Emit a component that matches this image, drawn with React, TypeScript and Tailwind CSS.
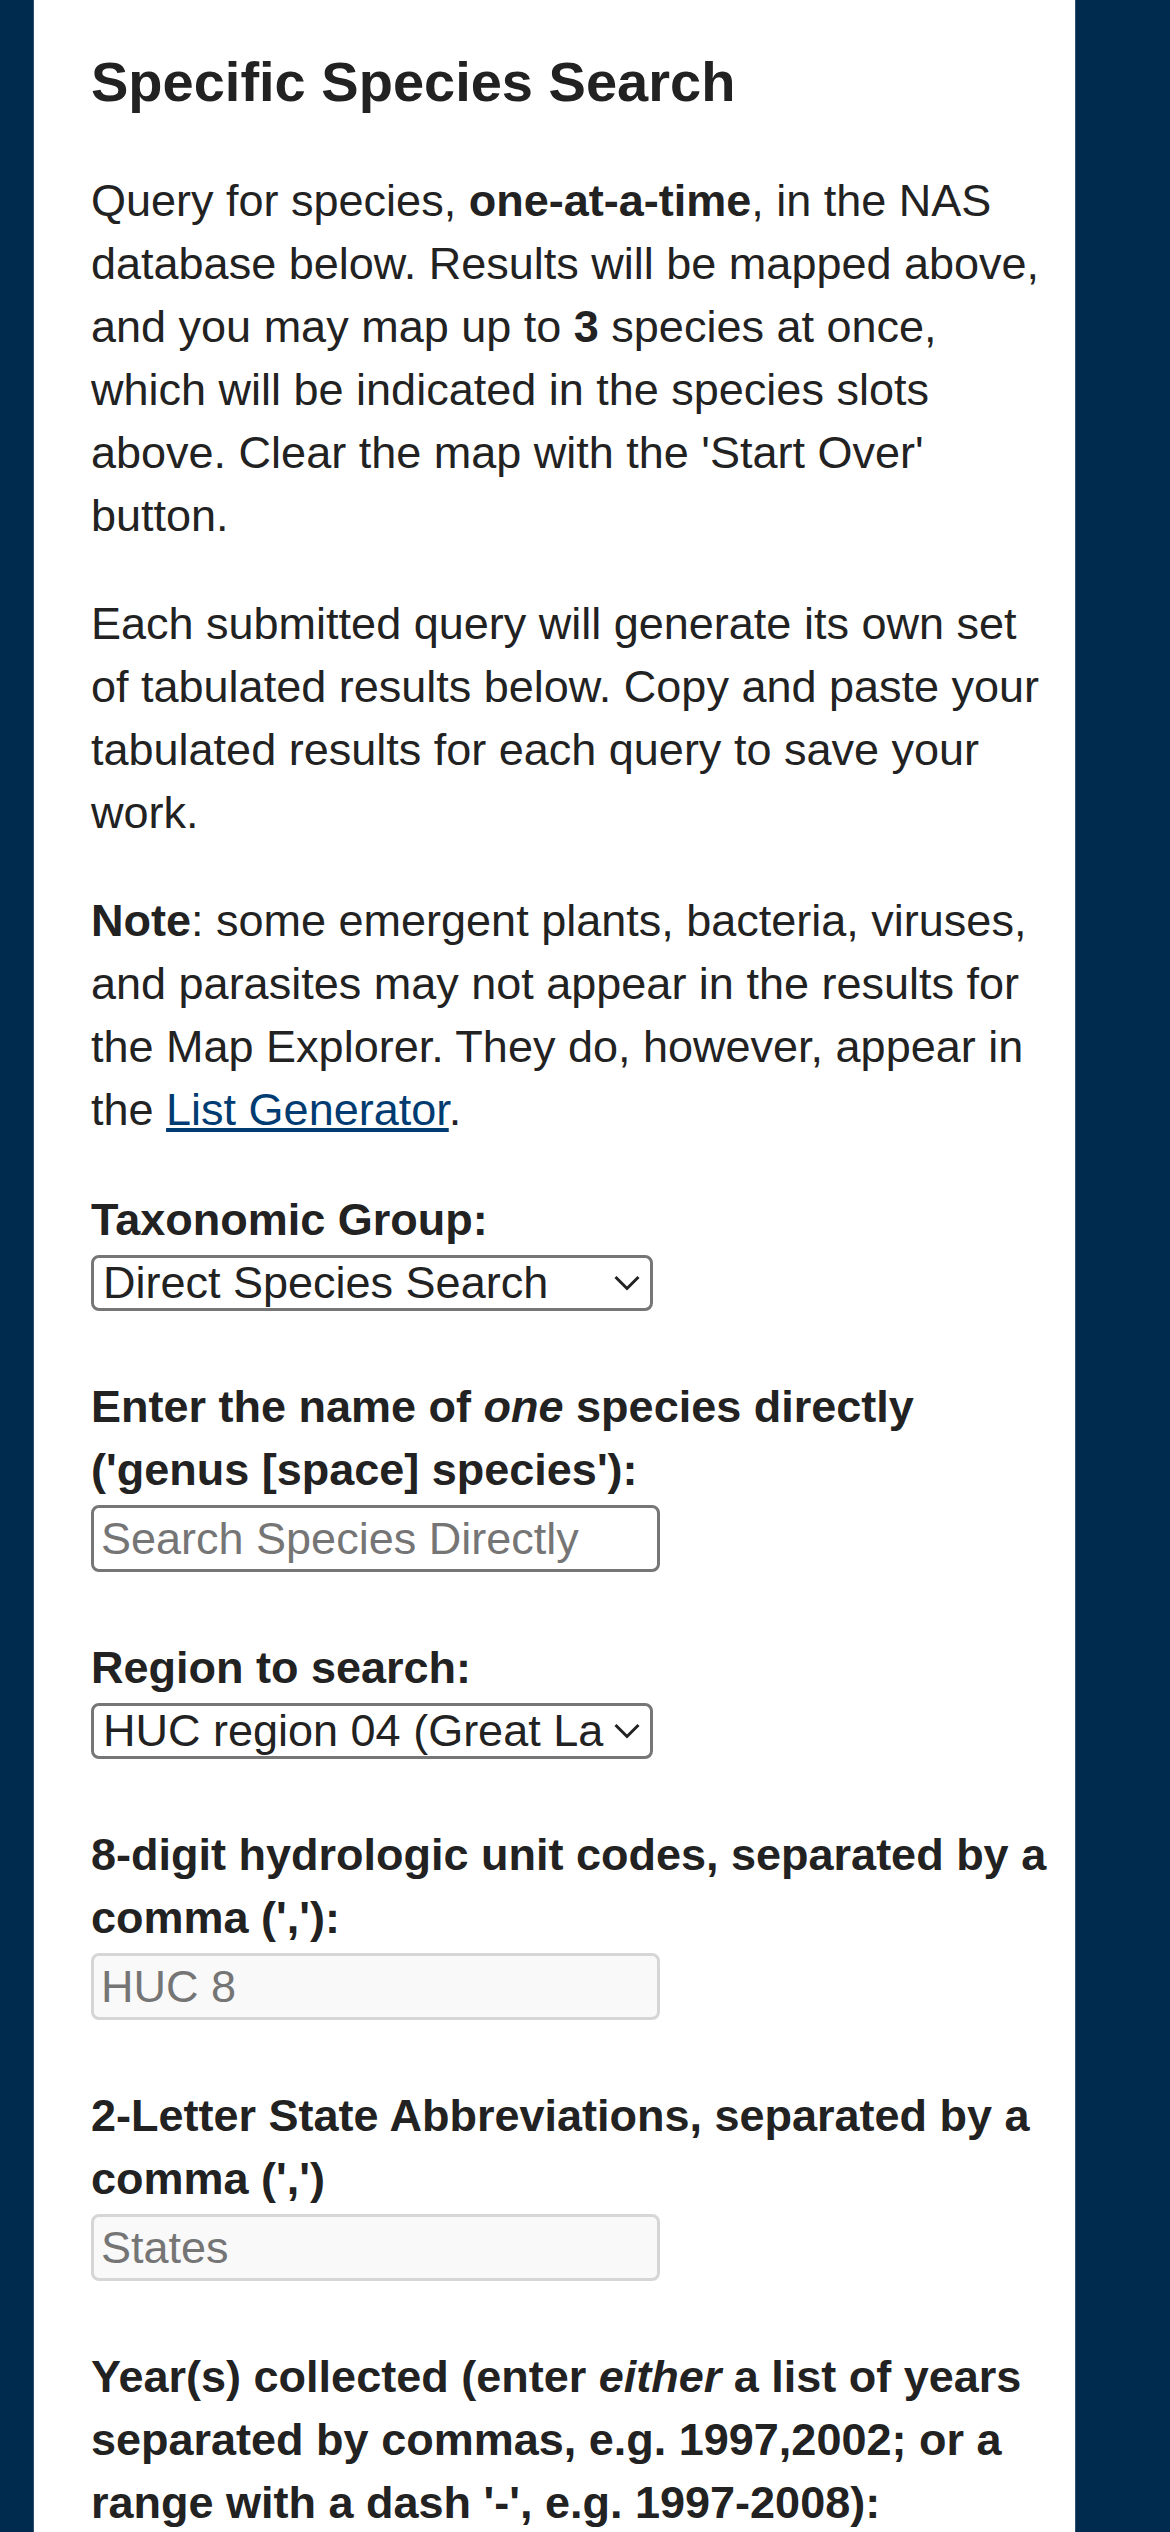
import React from 'react';

const font = { fontFamily: '"Liberation Sans", Arial, Helvetica, sans-serif' };

function Chevron() {
  return (
    <svg
      width="26"
      height="16"
      viewBox="0 0 26 16"
      fill="none"
      className="pointer-events-none absolute right-[13px] top-1/2 -translate-y-1/2"
    >
      <path d="M1.5 2 L13 13.5 L24.5 2" stroke="#222" strokeWidth="3" />
    </svg>
  );
}

function Select({ value, options }: { value: string; options: string[] }) {
  return (
    <div className="relative mt-1 w-[562px]">
      <select
        defaultValue={value}
        className="block h-[56px] w-full appearance-none overflow-hidden whitespace-nowrap rounded-[8px] border-[3px] border-[#767676] bg-white pl-[9px] pr-[45px] text-[45px] leading-[50px] text-[#222]"
      >
        {options.map((o) => (
          <option key={o} value={o}>
            {o}
          </option>
        ))}
      </select>
      <Chevron />
    </div>
  );
}

function TextInput({ placeholder, disabled }: { placeholder: string; disabled?: boolean }) {
  return (
    <input
      type="text"
      placeholder={placeholder}
      disabled={disabled}
      className={
        'mt-1 block h-[67px] w-[569px] rounded-[8px] border-[3px] px-[7px] text-[45px] text-[#222] placeholder:text-[#757575] ' +
        (disabled ? 'border-[#d6d6d6] bg-[#f9f9f9]' : 'border-[#767676] bg-white')
      }
    />
  );
}

function Field({ label, children }: { label: React.ReactNode; children: React.ReactNode }) {
  return (
    <div className="mb-[64px]">
      <label className="block font-bold">{label}</label>
      {children}
    </div>
  );
}

export default function App() {
  return (
    <div className="min-h-screen bg-[#012a4f] pl-[33px] pr-[94px]" style={font}>
      <div className="min-h-screen border-x border-[#2f4f70] bg-white pl-[57px] pr-[23px] text-[45px] leading-[63px] text-[#222]">
        <h2 className="pt-[48px] text-[56px] font-bold leading-[67px]">Specific Species Search</h2>

        <p className="mt-[54px]">
          Query for species, <b>one-at-a-time</b>, in the NAS database below. Results will be mapped above,
          and you may map up to <b>3</b> species at once, which will be indicated in the species slots above.
          Clear the map with the 'Start Over' button.
        </p>

        <p className="mt-[45px]">
          Each submitted query will generate its own set of tabulated results below. Copy and paste your
          tabulated results for each query to save your work.
        </p>

        <p className="mt-[45px] mb-[47px]">
          <b>Note</b>: some emergent plants, bacteria, viruses, and parasites may not appear in the results for
          the Map Explorer. They do, however, appear in the{' '}
          <a href="#" className="text-[#003c71] underline">
            List Generator
          </a>
          .
        </p>

        <Field label="Taxonomic Group:">
          <Select
            value="Direct Species Search"
            options={['Fish', 'Amphibians', 'Reptiles', 'Mollusks', 'Plants', 'Direct Species Search']}
          />
        </Field>

        <Field
          label={
            <>
              Enter the name of <i>one</i> species directly ('genus [space] species'):
            </>
          }
        >
          <TextInput placeholder="Search Species Directly" />
        </Field>

        <Field label="Region to search:">
          <Select
            value="HUC region 04 (Great Lakes)"
            options={['Entire US', 'HUC region 04 (Great Lakes)', 'HUC 8', 'States']}
          />
        </Field>

        <Field label="8-digit hydrologic unit codes, separated by a comma (','):">
          <TextInput placeholder="HUC 8" disabled />
        </Field>

        <Field label="2-Letter State Abbreviations, separated by a comma (',')">
          <TextInput placeholder="States" disabled />
        </Field>

        <Field
          label={
            <>
              Year(s) collected (enter <i>either</i> a list of years separated by commas, e.g. 1997,2002; or a
              range with a dash '-', e.g. 1997-2008):
            </>
          }
        >
          <TextInput placeholder="Years" />
        </Field>
      </div>
    </div>
  );
}
